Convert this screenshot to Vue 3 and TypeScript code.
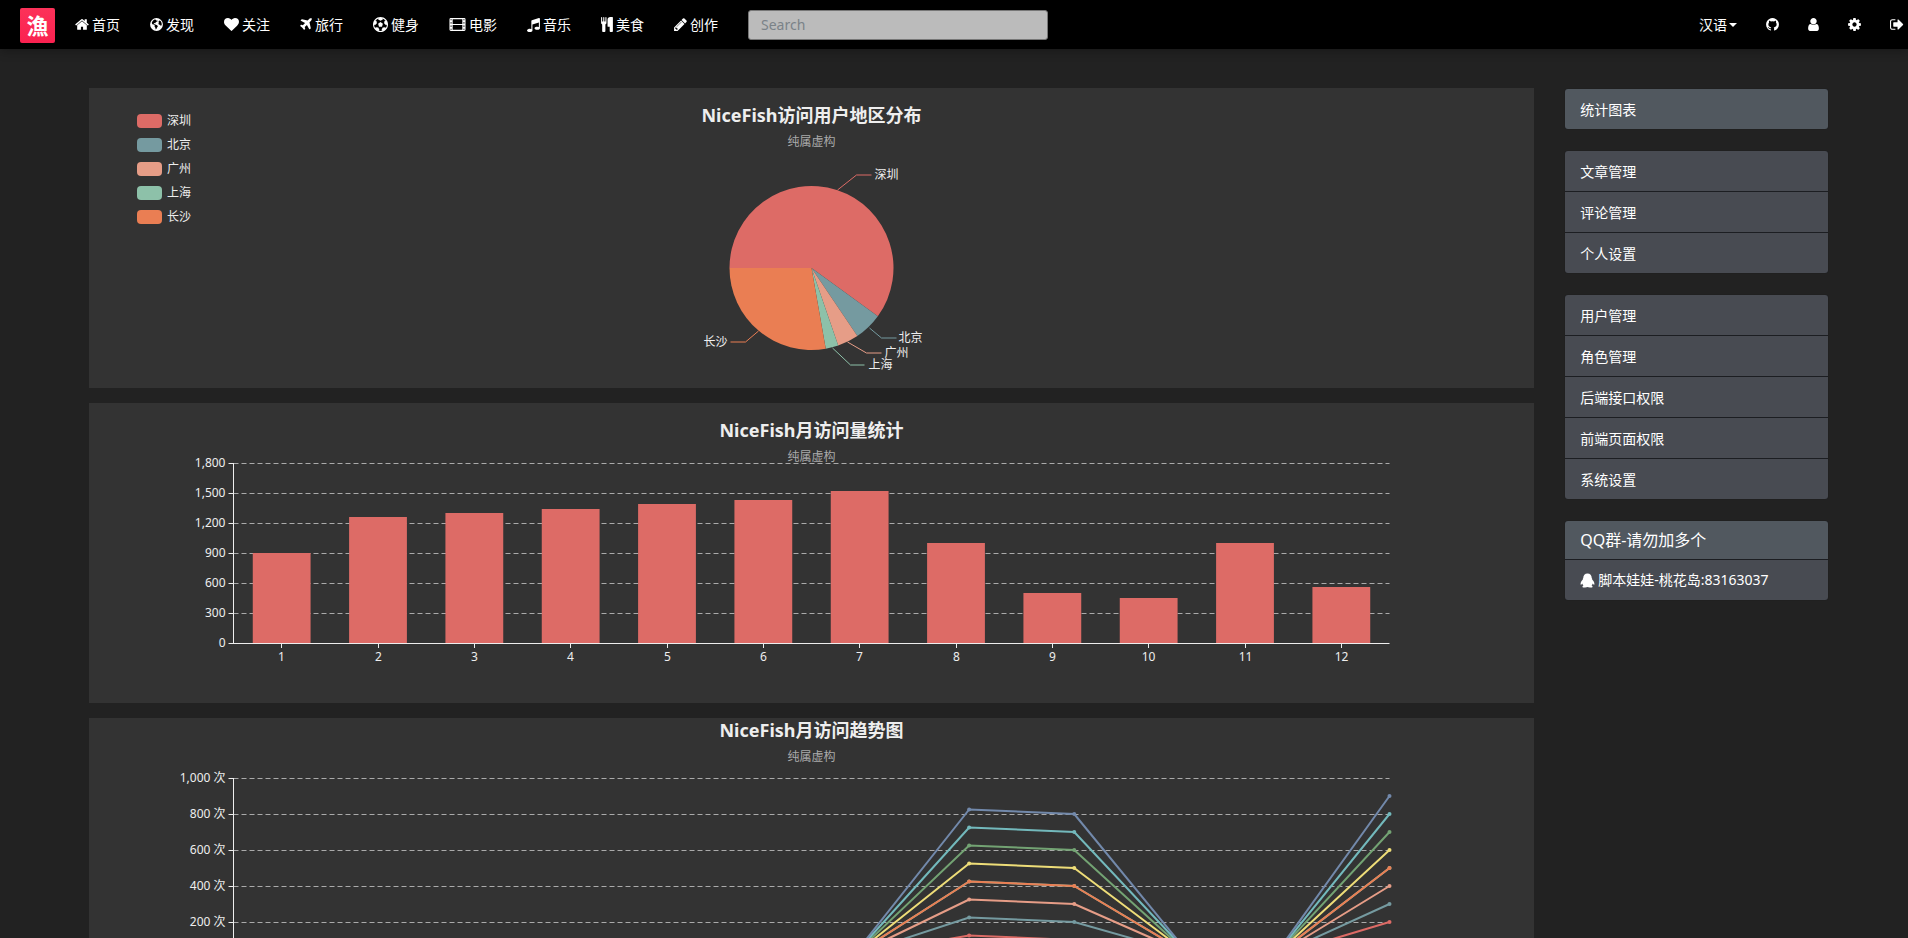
<script setup lang="ts">
import { computed, onBeforeUnmount, onMounted, ref } from 'vue'

interface Glyph { w: number; d: string }

const glyphs: Record<string, Glyph> = {
  home: { w: 1664, d: 'M1472 992v480q0 26-19 45t-45 19h-384v-384h-256v384h-384q-26 0-45-19t-19-45v-480q0-1 .5-3t.5-3l575-474 575 474q1 2 1 6zm223-69l-62 74q-8 9-21 11h-3q-13 0-21-7l-692-577-692 577q-12 8-24 7-13-2-21-11l-62-74q-8-10-7-23.5t11-21.5l719-599q32-26 76-26t76 26l244 204v-195q0-14 9-23t23-9h192q14 0 23 9t9 23v408l219 182q10 8 11 21.5t-7 23.5z' },
  globe: { w: 1536, d: 'M896 128a768 768 0 1 1 0 1536a768 768 0 1 1 0-1536zM600 330L440 480L330 700L400 860L560 900L700 1010L660 1140L760 1290L800 1500L900 1400L960 1240L1060 1120L980 1000L820 930L700 860L620 880L560 800L640 720L760 760L800 640L940 540L1040 500L960 400L860 440L820 340L700 290zM1240 420L1130 560L1180 700L1120 800L1200 940L1330 920L1380 1060L1460 1040L1530 860L1470 620L1380 480z' },
  heart: { w: 1792, d: 'M896 1664q-26 0-44-18l-624-602q-10-8-27.5-26t-55.5-65.5-68-97.5-53.5-121-23.5-138q0-220 127-344t351-124q62 0 126.5 21.5t120 58 95.5 68.5 76 68q36-36 76-68t95.5-68.5 120-58 126.5-21.5q224 0 351 124t127 344q0 221-229 450l-623 600q-18 18-44 18z' },
  plane: { w: 1408, d: 'M1568 160q44 52 12 148t-108 172l-161 161 160 696q5 19-12 33l-128 96q-7 6-19 6-4 0-7-1-15-3-21-16l-279-508-259 259 53 194q5 17-8 31l-96 96q-9 9-23 9h-2q-15-2-24-13l-189-252-252-189q-11-7-13-23-1-13 9-25l96-97q9-9 23-9 6 0 8 1l194 53 259-259-508-279q-14-8-17-24-2-16 9-27l128-128q14-13 30-8l665 159 160-160q76-76 172-108t148 12z' },
  ball: { w: 1792, d: 'M609 816l287-208 287 208-109 336h-355zm287-816q182 0 348 71t286 191 191 286 71 348-71 348-191 286-286 191-348 71-348-71-286-191-191-286-71-348 71-348 191-286 286-191 348-71zm619 1350q149-203 149-454v-3l-102 89-240-224 63-323 134 12q-150-206-389-282l53 124-287 159-287-159 53-124q-239 76-389 282l135-12 62 323-240 224-102-89v3q0 251 149 454l30-132 326 40 139 298-116 69q117 39 240 39t240-39l-116-69 139-298 326-40z' },
  film: { w: 1920, d: 'M96 128H1696a160 160 0 0 1 160 160V1504a160 160 0 0 1-160 160H96a160 160 0 0 1-160-160V288A160 160 0 0 1 96 128zM64 256V384H192V256zM64 640V768H192V640zM64 1024V1152H192V1024zM64 1408V1536H192V1408zM320 256V832H1472V256zM320 960V1536H1472V960zM1600 256V384H1728V256zM1600 640V768H1728V640zM1600 1024V1152H1728V1024zM1600 1408V1536H1728V1408z' },
  music: { w: 1536, d: 'M1664 224v1120q0 50-34 89t-86 60.5-103.5 32-96.5 10.5-96.5-10.5-103.5-32-86-60.5-34-89 34-89 86-60.5 103.5-32 96.5-10.5q105 0 192 39v-537l-768 237v709q0 50-34 89t-86 60.5-103.5 32-96.5 10.5-96.5-10.5-103.5-32-86-60.5-34-89 34-89 86-60.5 103.5-32 96.5-10.5q105 0 192 39v-967q0-31 19-56.5t49-35.5l832-256q12-4 28-4 40 0 68 28t28 68z' },
  cutlery: { w: 1408, d: 'M832 64v640q0 61-35.5 111t-92.5 70v779q0 52-38 90t-90 38h-128q-52 0-90-38t-38-90v-779q-57-20-92.5-70t-35.5-111v-640q0-26 19-45t45-19 45 19 19 45v416q0 26 19 45t45 19 45-19 19-45v-416q0-26 19-45t45-19 45 19 19 45v416q0 26 19 45t45 19 45-19 19-45v-416q0-26 19-45t45-19 45 19 19 45zm768 0v1600q0 52-38 90t-90 38h-128q-52 0-90-38t-38-90v-512h-224q-13 0-22.5-9.5t-9.5-22.5v-800q0-132 94-226t226-94h256q26 0 45 19t19 45z' },
  pencil: { w: 1536, d: 'M491 1536l91-91-235-235-91 91v107h128v128h107zm523-928q0-22-22-22-10 0-17 7l-542 542q-7 7-7 17 0 22 22 22 10 0 17-7l542-542q7-7 7-17zm-54-192l416 416-832 832h-416v-416zm683 96q0 53-37 90l-166 166-416-416 166-165q36-38 90-38 53 0 91 38l235 234q37 39 37 91z' },
  github: { w: 1536, d: 'M896 128q209 0 385.5 103t279.5 279.5 103 385.5q0 251-146.5 451.5t-378.5 277.5q-27 5-40-7t-13-30q0-3 .5-76.5t.5-134.5q0-97-52-142 57-6 102.5-18t94-39 81-66.5 53-105 20.5-150.5q0-119-79-206 37-91-8-204-28-9-81 11t-92 44l-38 24q-93-26-192-26t-192 26q-16-11-42.5-27t-83.5-38.5-85-13.5q-45 113-8 204-79 87-79 206 0 85 20.5 150t52.5 105 80.5 67 94 39 102.5 18q-39 36-49 103-21 10-45 15t-57 5-65.5-21.5-55.5-62.5q-19-32-48.5-52t-49.5-24l-20-3q-21 0-29 4.5t-5 11.5 9 14 13 12l7 5q22 10 43.5 38t31.5 51l10 23q13 38 44 61.5t67 30 69.5 7 55.5-3.5l23-4q0 38 .5 88.5t.5 54.5q0 18-13 30t-40 7q-232-77-378.5-277.5t-146.5-451.5q0-209 103-385.5t279.5-279.5 385.5-103z' },
  user: { w: 1280, d: 'M1536 1399q0 109-62.5 187t-150.5 78h-854q-88 0-150.5-78t-62.5-187q0-85 8.5-160.5t31.5-152 58.5-131 94-89 134.5-34.5q131 128 313 128t313-128q76 0 134.5 34.5t94 89 58.5 131 31.5 152 8.5 160.5zm-256-887q0 159-112.5 271.5t-271.5 112.5-271.5-112.5-112.5-271.5 112.5-271.5 271.5-112.5 271.5 112.5 112.5 271.5z' },
  cog: { w: 1536, d: 'M1152 896q0-106-75-181t-181-75-181 75-75 181 75 181 181 75 181-75 75-181zm512-109v222q0 12-8 23t-20 13l-185 28q-19 54-39 91 35 50 107 138 10 12 10 25t-9 23q-27 37-99 108t-94 71q-12 0-26-9l-138-108q-44 23-91 38-16 136-29 186-7 28-36 28h-222q-14 0-24.5-8.5t-11.5-21.5l-28-184q-49-16-90-37l-141 107q-10 9-25 9-14 0-25-11-126-114-165-168-7-10-7-23 0-12 8-23 15-21 51-66.5t54-70.5q-27-50-41-99l-183-27q-13-2-21-12.5t-8-23.5v-222q0-12 8-23t19-13l186-28q14-46 39-92-40-57-107-138-10-12-10-24 0-10 9-23 26-36 98.5-107.5t94.5-71.5q13 0 26 10l138 107q44-23 91-38 16-136 29-186 7-28 36-28h222q14 0 24.5 8.5t11.5 21.5l28 184q49 16 90 37l142-107q9-9 24-9 13 0 25 10 129 119 165 170 7 8 7 22 0 12-8 23-15 21-51 66.5t-54 70.5q26 50 41 98l183 28q13 2 21 12.5t8 23.5z' },
  signout: { w: 1664, d: 'M704 1440q0 4 1 20t.5 26.5-3 23.5-10 19.5-20.5 6.5h-320q-119 0-203.5-84.5t-84.5-203.5v-704q0-119 84.5-203.5t203.5-84.5h320q13 0 22.5 9.5t9.5 22.5q0 4 1 20t.5 26.5-3 23.5-10 19.5-20.5 6.5h-320q-66 0-113 47t-47 113v704q0 66 47 113t113 47h312l11.5 1 11.5 3 8 5.5 7 9 2 13.5zm928-544q0 26-19 45l-544 544q-19 19-45 19t-45-19-19-45v-288h-448q-26 0-45-19t-19-45v-384q0-26 19-45t45-19h448v-288q0-26 19-45t45-19 45 19l544 544q19 19 19 45z' },
  qq: { w: 1792, d: 'M896 64C580 64 390 290 390 590C340 640 320 720 340 790C200 930 60 1120 70 1300C75 1400 120 1430 170 1380C210 1340 240 1300 260 1260C290 1350 340 1430 410 1490C330 1520 280 1570 290 1630C300 1700 420 1728 600 1728C740 1728 840 1710 896 1670C952 1710 1052 1728 1192 1728C1372 1728 1492 1700 1502 1630C1512 1570 1462 1520 1382 1490C1452 1430 1502 1350 1532 1260C1552 1300 1582 1340 1622 1380C1672 1430 1717 1400 1722 1300C1732 1120 1592 930 1452 790C1472 720 1452 640 1402 590C1402 290 1212 64 896 64z' }
}

const viewBox = (g: Glyph) => `${(1792 - g.w) / 2} 0 ${g.w} 1792`
const glyphWidth = (g: Glyph) => Math.ceil((g.w / 1792) * 15)

const mainNav = [
  { icon: 'home', text: '首页' },
  { icon: 'globe', text: '发现' },
  { icon: 'heart', text: '关注' },
  { icon: 'plane', text: '旅行' },
  { icon: 'ball', text: '健身' },
  { icon: 'film', text: '电影' },
  { icon: 'music', text: '音乐' },
  { icon: 'cutlery', text: '美食' },
  { icon: 'pencil', text: '创作' }
]
const tools = [
  { icon: 'github', label: 'GitHub' },
  { icon: 'user', label: '用户' },
  { icon: 'cog', label: '设置' },
  { icon: 'signout', label: '退出' }
]
const menuGroups = [
  ['统计图表'],
  ['文章管理', '评论管理', '个人设置'],
  ['用户管理', '角色管理', '后端接口权限', '前端页面权限', '系统设置']
]

const keyword = ref('')
const active = ref('统计图表')

const chartColumn = ref<HTMLElement | null>(null)
const width = ref(1445)
let observer: ResizeObserver | undefined
const measure = () => { if (chartColumn.value) width.value = chartColumn.value.clientWidth }
onMounted(() => {
  measure()
  observer = new ResizeObserver(measure)
  if (chartColumn.value) observer.observe(chartColumn.value)
})
onBeforeUnmount(() => observer?.disconnect())

const center = computed(() => width.value / 2)
const left = computed(() => Math.floor(width.value * 0.1) + 0.5)
const plotWidth = computed(() => width.value * 0.8)
const right = computed(() => left.value + plotWidth.value)

/* Pie */
const radius = 82
const regions = [
  { name: '深圳', value: 216, color: '#dd6b66', line: '26,-78 45,-93 60,-93', tx: 63, ty: -93, anchor: 'start' },
  { name: '北京', value: 20, color: '#759aa0', line: '58,60 70,70 85,70', tx: 87, ty: 70, anchor: 'start' },
  { name: '广州', value: 15, color: '#e69d87', line: '36,74 55,85 70,85', tx: 73, ty: 85, anchor: 'start' },
  { name: '上海', value: 9, color: '#8dc1a9', line: '21,80 39,97 53,97', tx: 57, ty: 97, anchor: 'start' },
  { name: '长沙', value: 100, color: '#ea7e53', line: '-53,63 -66,74 -81,74', tx: -84, ty: 74, anchor: 'end' }
] as const
const total = regions.reduce((sum, r) => sum + r.value, 0)
const slices = computed(() => {
  let angle = Math.PI
  return regions.map((r) => {
    const sweep = (r.value / total) * Math.PI * 2
    const from = angle
    angle += sweep
    const point = (a: number) => `${(radius * Math.cos(a)).toFixed(2)} ${(radius * Math.sin(a)).toFixed(2)}`
    return { ...r, d: `M0 0L${point(from)}A${radius} ${radius} 0 ${sweep > Math.PI ? 1 : 0} 1 ${point(angle)}Z` }
  })
})

/* Monthly bars */
const visits = [900, 1260, 1300, 1340, 1390, 1430, 1520, 1000, 500, 450, 1000, 560]
const barTicks = [1800, 1500, 1200, 900, 600, 300, 0]
const bars = computed(() => {
  const band = plotWidth.value / visits.length
  return visits.map((v, i) => ({
    month: i + 1,
    x: left.value + band * (i + 0.2),
    mid: Math.floor(left.value + band * (i + 0.5)) + 0.5,
    w: band * 0.6,
    y: 240 - v / 10,
    h: v / 10
  }))
})

/* Trend lines */
const lineTicks = [1000, 800, 600, 400, 200, 0]
const palette = ['#dd6b66', '#759aa0', '#e69d87', '#8dc1a9', '#ea7e53', '#eedd78', '#73a373', '#73b9bc', '#7289ab']
const levels = [0, 1, 2, 3, 3, 4, 5, 6, 7]
const trends = computed(() => palette.map((color, s) => {
  const n = levels[s]
  const low = 25 + n * 9
  const values = [low, low, low, low, low, low, low, 125 + n * 100, 100 + n * 100, low, low, 200 + n * 100]
  const points = values.map((v, i) => ({
    x: left.value + (plotWidth.value / (values.length - 1)) * i,
    y: 240 - v * 0.18
  }))
  return { color, points, path: points.map((p) => `${p.x},${p.y}`).join(' ') }
}))
</script>

<template>
  <div class="page">
    <header class="navbar">
      <a class="logo" href="#" aria-label="NiceFish">漁</a>
      <nav class="nav" aria-label="主导航">
        <a v-for="item in mainNav" :key="item.text" class="nav-link" href="#">
          <svg class="icon" :width="glyphWidth(glyphs[item.icon])" height="15" :viewBox="viewBox(glyphs[item.icon])" aria-hidden="true">
            <path :d="glyphs[item.icon].d" :fill-rule="item.icon === 'film' || item.icon === 'globe' ? 'evenodd' : 'nonzero'" />
          </svg>
          <span>{{ item.text }}</span>
        </a>
      </nav>
      <input v-model="keyword" class="search" type="text" placeholder="Search" aria-label="Search" />
      <div class="tools">
        <button class="tool language" type="button" aria-haspopup="true">汉语<span class="caret"></span></button>
        <a v-for="tool in tools" :key="tool.icon" class="tool" href="#" :aria-label="tool.label">
          <svg class="icon" :width="glyphWidth(glyphs[tool.icon])" height="15" :viewBox="viewBox(glyphs[tool.icon])" aria-hidden="true">
            <path :d="glyphs[tool.icon].d" />
          </svg>
        </a>
      </div>
    </header>

    <div class="layout">
      <main ref="chartColumn" class="charts">
        <section class="chart" aria-label="NiceFish访问用户地区分布">
          <svg class="canvas" width="100%" height="300">
            <g v-for="(r, i) in regions" :key="r.name">
              <rect x="48" :y="26 + i * 24" width="25" height="14" rx="4" :fill="r.color" />
              <text class="label" x="78" :y="37 + i * 24">{{ r.name }}</text>
            </g>
            <text class="title" :x="center" y="34">NiceFish访问用户地区分布</text>
            <text class="subtitle" :x="center" y="58">纯属虚构</text>
            <g :transform="`translate(${center} 180)`">
              <path v-for="s in slices" :key="s.name" :d="s.d" :fill="s.color" />
              <g v-for="s in slices" :key="s.name">
                <polyline :points="s.line" fill="none" :stroke="s.color" />
                <text class="label" :x="s.tx" :y="s.ty + 4" :text-anchor="s.anchor">{{ s.name }}</text>
              </g>
            </g>
          </svg>
        </section>

        <section class="chart" aria-label="NiceFish月访问量统计">
          <svg class="canvas" width="100%" height="300">
            <line v-for="(t, i) in barTicks.slice(0, 6)" :key="t" class="grid" :x1="left" :x2="right" :y1="60.5 + i * 30" :y2="60.5 + i * 30" />
            <rect v-for="b in bars" :key="b.month" :x="b.x" :y="b.y" :width="b.w" :height="b.h" fill="#dd6b66" />
            <path class="axis" :d="`M${left} 60V241M${left} 240.5H${right}`" />
            <g v-for="(t, i) in barTicks" :key="t">
              <line class="axis" :x1="left - 5" :x2="left" :y1="60.5 + i * 30" :y2="60.5 + i * 30" />
              <text class="label" :x="left - 8" :y="64 + i * 30" text-anchor="end">{{ t.toLocaleString('en-US') }}</text>
            </g>
            <g v-for="b in bars" :key="b.month">
              <line class="axis" :x1="b.mid" :x2="b.mid" y1="240" y2="245" />
              <text class="label" :x="b.mid" y="258" text-anchor="middle">{{ b.month }}</text>
            </g>
            <text class="title" :x="center" y="34">NiceFish月访问量统计</text>
            <text class="subtitle" :x="center" y="58">纯属虚构</text>
          </svg>
        </section>

        <section class="chart" aria-label="NiceFish月访问趋势图">
          <svg class="canvas" width="100%" height="300">
            <line v-for="(t, i) in lineTicks.slice(0, 5)" :key="t" class="grid" :x1="left" :x2="right" :y1="60.5 + i * 36" :y2="60.5 + i * 36" />
            <path class="axis" :d="`M${left} 60V241M${left} 240.5H${right}`" />
            <g v-for="(t, i) in lineTicks" :key="t">
              <line class="axis" :x1="left - 5" :x2="left" :y1="60.5 + i * 36" :y2="60.5 + i * 36" />
              <text class="label" :x="left - 8" :y="64 + i * 36" text-anchor="end">{{ t.toLocaleString('en-US') }} 次</text>
            </g>
            <g v-for="line in trends" :key="line.color">
              <polyline :points="line.path" fill="none" :stroke="line.color" stroke-width="2" stroke-linejoin="bevel" />
              <circle v-for="p in line.points" :key="p.x" :cx="p.x" :cy="p.y" r="2" :fill="line.color" />
            </g>
            <text class="title" :x="center" y="19">NiceFish月访问趋势图</text>
            <text class="subtitle" :x="center" y="43">纯属虚构</text>
          </svg>
        </section>
      </main>

      <aside class="sidebar">
        <nav v-for="(group, g) in menuGroups" :key="g" class="menu">
          <a v-for="item in group" :key="item" class="menu-item" :class="{ active: item === active }" href="#" @click.prevent="active = item">{{ item }}</a>
        </nav>
        <section class="menu">
          <h2 class="menu-heading">QQ群-请勿加多个</h2>
          <a class="menu-item contact" href="#">
            <svg class="icon" width="15" height="15" viewBox="0 0 1792 1792" aria-hidden="true"><path :d="glyphs.qq.d" /></svg>
            <span>脚本娃娃-桃花岛:83163037</span>
          </a>
        </section>
      </aside>
    </div>
  </div>
</template>

<style>
body {
  margin: 0;
  background: #222;
}
</style>

<style scoped>
.page {
  height: 100vh;
  overflow: hidden auto;
  scrollbar-width: none;
  background: #222;
  color: #fff;
  font-family: "Noto Sans", "Noto Sans CJK SC", sans-serif;
  font-size: 14px;
  line-height: 20px;
}
.page * {
  box-sizing: border-box;
}
a {
  color: inherit;
  text-decoration: none;
}
.navbar {
  display: flex;
  align-items: center;
  height: 49px;
  padding: 0 0 0 20px;
  background: #000;
  box-shadow: 0 2px 10px rgba(0, 0, 0, 0.3);
}
.logo {
  display: grid;
  place-items: center;
  flex: none;
  width: 35px;
  height: 35px;
  margin: 2px 5px 0 0;
  padding-bottom: 4px;
  border-radius: 2px;
  background: linear-gradient(#fc3259, #fa2150);
  font-family: "Noto Sans CJK TC", sans-serif;
  font-size: 22px;
  font-weight: 700;
  line-height: 30px;
}
.nav {
  display: flex;
}
.nav-link {
  display: flex;
  align-items: center;
  gap: 3px;
  padding: 0 15px;
  white-space: nowrap;
}
.icon {
  flex: none;
  fill: currentColor;
}
.search {
  width: 300px;
  height: 30px;
  margin-left: 15px;
  padding: 0 12px;
  border: 1px solid #777;
  border-radius: 3px;
  outline: 0;
  background: #bbb;
  color: #272b30;
  font: inherit;
}
.search::placeholder {
  color: #7a8288;
  opacity: 1;
}
.tools {
  display: flex;
  align-items: center;
  margin-left: auto;
  padding-right: 4px;
}
.tool {
  display: flex;
  align-items: center;
  padding: 0 14px 0 15px;
}
.tool:last-child {
  padding-right: 0;
}
.language {
  gap: 2px;
  border: 0;
  background: none;
  color: inherit;
  font: inherit;
}
.caret {
  border-top: 4px solid #fff;
  border-right: 4px solid transparent;
  border-left: 4px solid transparent;
}
.layout {
  display: grid;
  grid-template-columns: minmax(0, 11fr) minmax(0, 2fr);
  gap: 31px;
  padding: 39px 80px 15px 89px;
}
.charts {
  display: grid;
  align-content: start;
  gap: 15px;
}
.chart {
  background: #333;
}
.canvas {
  display: block;
}
.canvas text {
  fill: #eee;
  font-size: 12px;
}
.canvas .title {
  font-size: 18px;
  font-weight: 700;
  text-anchor: middle;
}
.canvas .subtitle {
  fill: #aaa;
  text-anchor: middle;
}
.axis {
  fill: none;
  stroke: #eee;
}
.grid {
  stroke: #aaa;
  stroke-dasharray: 5 3;
}
.sidebar {
  display: flex;
  flex-direction: column;
  gap: 22px;
  padding-top: 1px;
}
.menu {
  display: grid;
  gap: 1px;
  overflow: hidden;
  border-radius: 3px;
  box-shadow: 0 0 1px #16181a;
  background: #1c1e22;
}
.menu-item,
.menu-heading {
  display: flex;
  align-items: center;
  gap: 3px;
  margin: 0;
  padding: 11px 15px 9px;
  background: #484b52;
  white-space: nowrap;
}
.menu-heading {
  padding: 9px 15px;
  font-size: 16px;
  font-weight: 400;
}
.contact {
  padding: 10px 15px;
}
.menu-item.active,
.menu-heading {
  background: #51585f;
}
</style>
